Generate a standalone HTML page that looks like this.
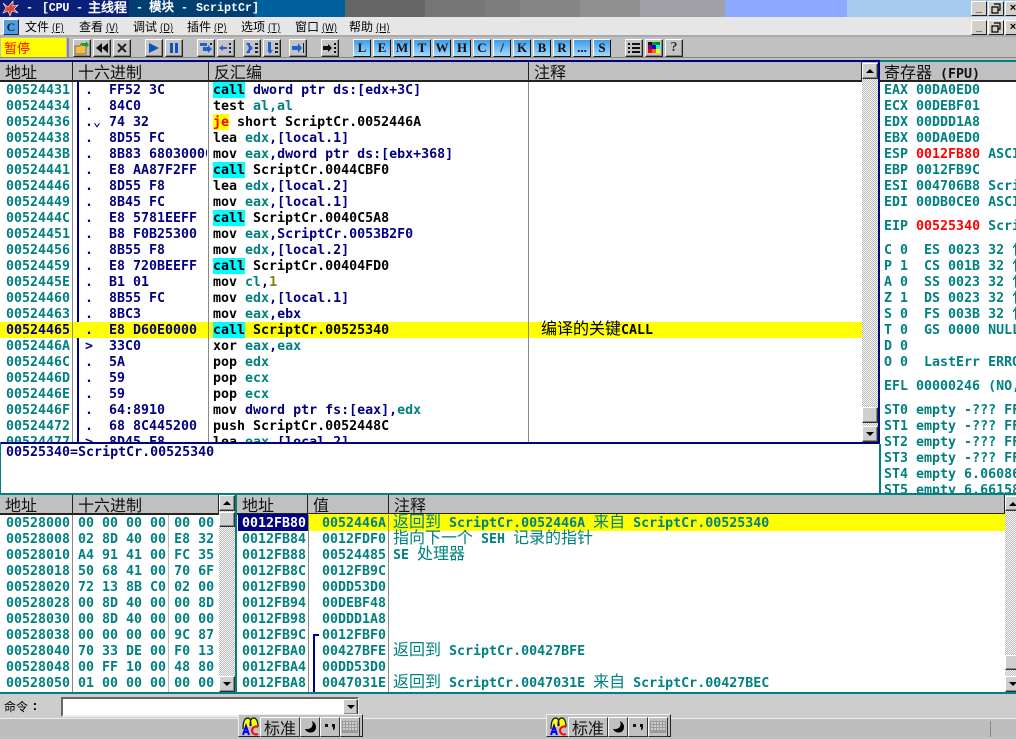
<!DOCTYPE html>
<html><head><meta charset="utf-8"><style>
html,body{margin:0;padding:0;width:1016px;height:737px;overflow:hidden;background:#c0c0c0}
*{box-sizing:border-box}
.a{position:absolute}
pre,.m{position:absolute;margin:0;font:bold 13.3px/16px "DejaVu Sans Mono","Liberation Mono",monospace;white-space:pre;color:#008080}
.n{color:#000080}.b{color:#000}.t{color:#008080}.r{color:#f00}.o{color:#808000}
.cy{background:linear-gradient(#0ff 15px,transparent 15px);box-shadow:0 -1px #0ff;color:#000;display:inline-block;height:16px}
.ye{background:linear-gradient(#ff0 15px,transparent 15px);box-shadow:0 -1px #ff0;color:#f00;display:inline-block;height:16px}
.c{font-family:"WenQuanYi Zen Hei","Noto Sans CJK SC",sans-serif;font-weight:normal}
pre .c{line-height:0;font-size:16px}
.h{position:absolute;background:#c0c0c0;font:16px/19px "WenQuanYi Zen Hei","Noto Sans CJK SC",sans-serif;color:#111;padding-left:5px;border-right:1px solid #222;border-bottom:2px solid #222;height:20px;overflow:hidden;white-space:nowrap}
.mi{position:absolute;top:19px;font:12px/16px "WenQuanYi Zen Hei","Noto Sans CJK SC",sans-serif;color:#000;white-space:nowrap}
.mi u{font-size:10px}
.btn{position:absolute;width:18px;height:18px;top:39px;background:#c4c4c4;border:1px solid;border-color:#fff #222 #222 #fff;box-shadow:inset -1px -1px #888}
.btn svg{position:absolute;left:0;top:0;width:16px;height:16px}
.lb{position:absolute;top:39px;width:18px;height:18px;background:linear-gradient(#3f9fe8,#a5d8ff);border:1px solid;border-color:#fff #111 #111 #fff;font:bold 13px/16px "Liberation Serif",serif;color:#111;text-align:center}
.wb{position:absolute;width:16px;height:15px;background:#d4d0c8;border:1px solid;border-color:#fff #222 #222 #fff;font:bold 11px/12px "Liberation Sans",sans-serif;text-align:center;color:#000;overflow:hidden}
.sb{position:absolute;background:#cfcfcf;border:1px solid;border-color:#fff #333 #333 #fff;box-shadow:inset -1px -1px #888}
.up:after,.dn:after{content:"";position:absolute;left:3px;top:5px;border-left:4px solid transparent;border-right:4px solid transparent}
.up:after{border-bottom:4px solid #000}.dn:after{border-top:4px solid #000}
.ck{position:absolute;background:repeating-conic-gradient(#bcbcbc 0 25%,#f6f6f6 0 50%) 0 0/2px 2px}
.ime{position:absolute;top:714px;width:125px;height:23px;background:#c0c0c0;border:1px solid;border-color:#eee #222 #222 #eee}
.ime b{position:absolute;top:2px;height:20px;background:#c0c0c0;border:1px solid;border-color:#fff #333 #333 #fff;font:16px/18px "WenQuanYi Zen Hei","Noto Sans CJK SC",sans-serif;color:#111;text-align:center}
.ime svg{position:absolute}
.tt{position:absolute;top:0;height:17px;color:#fff;white-space:pre;font:bold 11.66px/17px "Liberation Mono",monospace}
</style></head><body>

<!-- title bar bands -->
<div class="a" style="left:0;top:0;width:129px;height:17px;background:#0a1f78"></div>
<div class="a" style="left:129px;top:0;width:126px;height:17px;background:#004070"></div>
<div class="a" style="left:255px;top:0;width:90px;height:17px;background:#00609c"></div>
<div class="a" style="left:345px;top:0;width:80px;height:17px;background:#666"></div>
<div class="a" style="left:425px;top:0;width:60px;height:17px;background:#767676"></div>
<div class="a" style="left:485px;top:0;width:35px;height:17px;background:#7c7c7c"></div>
<div class="a" style="left:520px;top:0;width:60px;height:17px;background:#858585"></div>
<div class="a" style="left:580px;top:0;width:60px;height:17px;background:#909090"></div>
<div class="a" style="left:640px;top:0;width:85px;height:17px;background:#a0a0a6"></div>
<div class="a" style="left:725px;top:0;width:122px;height:17px;background:#8ca8ff"></div>
<div class="a" style="left:847px;top:0;width:169px;height:17px;background:#a6caf0"></div>
<svg class="a" style="left:1px;top:0" width="18" height="17" viewBox="0 0 18 17"><path d="M2 3l5 4 5-6 0 5 5-1-4 4 4 4-6-2-2 5-2-5-5 2 3-5z" fill="#e04030" stroke="#fff" stroke-width=".6"/></svg>
<div class="tt" style="left:26px">-</div>
<div class="tt" style="left:42px;letter-spacing:-.2px">[CPU</div>
<div class="tt" style="left:76px">-</div>
<div class="tt c" style="left:88px;font-size:13px;font-weight:bold">主线程</div>
<div class="tt" style="left:136px">-</div>
<div class="tt c" style="left:149px;font-size:12.5px;font-weight:bold">模块</div>
<div class="tt" style="left:181px">-</div>
<div class="tt" style="left:196px">ScriptCr]</div>
<div class="wb" style="left:971px;top:1px">_</div>
<div class="wb" style="left:988px;top:1px"><svg width="14" height="13"><path d="M5 2h6v6h-2M3 5h6v6H3z" fill="none" stroke="#000" stroke-width="1.2"/></svg></div>
<div class="wb" style="left:1005px;top:1px">×</div>

<!-- menu -->
<div class="a" style="left:0;top:17px;width:1016px;height:20px;background:#e6e6e6;border-bottom:2px solid #aaa"></div>
<div class="a" style="left:3px;top:19px;width:16px;height:16px;background:#4aa0e0;border:1px solid;border-color:#fff #225 #225 #fff;font:bold 12px/14px 'Liberation Serif',serif;color:#123;text-align:center">C</div>
<div class="mi" style="left:25px">文件 <u>(F)</u></div>
<div class="mi" style="left:79px">查看 <u>(V)</u></div>
<div class="mi" style="left:133px">调试 <u>(D)</u></div>
<div class="mi" style="left:187px">插件 <u>(P)</u></div>
<div class="mi" style="left:241px">选项 <u>(T)</u></div>
<div class="mi" style="left:295px">窗口 <u>(W)</u></div>
<div class="mi" style="left:349px">帮助 <u>(H)</u></div>
<div class="wb" style="left:971px;top:20px">_</div>
<div class="wb" style="left:988px;top:20px"><svg width="14" height="13"><path d="M5 2h6v6h-2M3 5h6v6H3z" fill="none" stroke="#000" stroke-width="1.2"/></svg></div>
<div class="wb" style="left:1005px;top:20px">×</div>

<!-- toolbar -->
<div class="a" style="left:0;top:37px;width:1016px;height:21px;background:#c0c0c0;border-bottom:1px solid #888"></div>
<div class="a c" style="left:1px;top:38px;width:65px;height:19px;background:#ff0;color:#f00;font-size:13px;line-height:19px;padding-left:3px">暂停</div>
<div class="a" style="left:67px;top:38px;width:2px;height:19px;background:#888"></div>

<div class="btn" style="left:73px"><svg viewBox="0 0 16 16"><path d="M1 6h5l1-2h5v10H1z" fill="#f0c040" stroke="#864"/><path d="M7 3l5 0 0-2 3 4-3 3 0-2-4 0z" fill="#1a9a30"/></svg></div>
<div class="btn" style="left:93px"><svg viewBox="0 0 16 16"><path d="M8 3v10L2 8zM14 3v10L8 8z" fill="#111"/></svg></div>
<div class="btn" style="left:113px"><svg viewBox="0 0 16 16"><path d="M4 4l8 8M12 4l-8 8" stroke="#222" stroke-width="2"/></svg></div>
<div class="btn" style="left:145px"><svg viewBox="0 0 16 16"><path d="M3 3v10l10-5z" fill="#1050c0"/></svg></div>
<div class="btn" style="left:165px"><svg viewBox="0 0 16 16"><path d="M4 3h3v10H4zM9 3h3v10H9z" fill="#1050c0"/></svg></div>
<div class="btn" style="left:197px"><svg viewBox="0 0 16 16"><path d="M2 3h7v3h-7zM5 7h5V5l4 4-4 4v-2H5z" fill="#2060d0"/><path d="M12 3h2v2h-2z" fill="#222"/></svg></div>
<div class="btn" style="left:217px"><svg viewBox="0 0 16 16"><path d="M1 8l4-3v2h4v2H5v2z" fill="#2060d0"/><path d="M11 3h2v2h-2zM11 7h2v2h-2zM11 11h2v2h-2z" fill="#222"/></svg></div>
<div class="btn" style="left:243px"><svg viewBox="0 0 16 16"><path d="M2 3h4v2l3 3-3 3v2H2l3-5z" fill="#2060d0"/><path d="M11 3h3v2h-3zM11 7h3v2h-3zM11 11h3v2h-3z" fill="#222"/></svg></div>
<div class="btn" style="left:263px"><svg viewBox="0 0 16 16"><path d="M4 2h3v8h2l-3 4-3-4h1z" fill="#2060d0"/><path d="M11 3h3v2h-3zM11 7h3v2h-3zM11 11h3v2h-3z" fill="#222"/></svg></div>
<div class="btn" style="left:289px"><svg viewBox="0 0 16 16"><path d="M2 6h6V3l4 5-4 5v-3H2z" fill="#2060d0"/><path d="M13 3h1v10h-1z" fill="#222"/></svg></div>
<div class="btn" style="left:321px"><svg viewBox="0 0 16 16"><path d="M1 6h5V4l4 4-4 4v-2H1z" fill="#111"/><path d="M12 3h2v2h-2zM12 7h2v2h-2zM12 11h2v2h-2z" fill="#111"/></svg></div>

<div class="lb" style="left:353px">L</div><div class="lb" style="left:373px">E</div><div class="lb" style="left:393px">M</div><div class="lb" style="left:413px">T</div><div class="lb" style="left:433px">W</div><div class="lb" style="left:453px">H</div><div class="lb" style="left:473px">C</div><div class="lb" style="left:493px">/</div><div class="lb" style="left:513px">K</div><div class="lb" style="left:533px">B</div><div class="lb" style="left:553px">R</div><div class="lb" style="left:573px">...</div><div class="lb" style="left:593px">S</div>

<div class="btn" style="left:625px"><svg viewBox="0 0 16 16"><path d="M2 3h2v2H2zM6 3h8v2H6zM2 7h2v2H2zM6 7h8v2H6zM2 11h2v2H2zM6 11h8v2H6z" fill="#111"/></svg></div>
<div class="btn" style="left:645px"><svg viewBox="0 0 16 16"><path d="M2 2h4v3H2z" fill="#111"/><path d="M6 2h4v3H6z" fill="#0a0"/><path d="M10 2h4v3h-4z" fill="#080"/><path d="M2 5h4v4H2z" fill="#808"/><path d="M6 5h4v4H6z" fill="#00f"/><path d="M10 5h4v4h-4z" fill="#0ff"/><path d="M2 9h4v4H2z" fill="#f00"/><path d="M6 9h4v4H6z" fill="#f60"/><path d="M10 9h4v4h-4z" fill="#ff0"/></svg></div>
<div class="btn" style="left:665px;font:bold 14px/15px 'Liberation Serif',serif;text-align:center;color:#333">?</div>

<!-- disasm pane -->
<div class="a" style="left:0;top:60px;width:880px;height:2px;background:#000080"></div>
<div class="a" style="left:880px;top:60px;width:136px;height:2px;background:#008080"></div>
<div class="a" style="left:0;top:82px;width:878px;height:360px;background:#fff"></div>
<div class="h" style="left:0;top:62px;width:73px">地址</div>
<div class="h" style="left:73px;top:62px;width:136px">十六进制</div>
<div class="h" style="left:209px;top:62px;width:320px">反汇编</div>
<div class="h" style="left:529px;top:62px;width:333px">注释</div>
<div class="a" style="left:0;top:322px;width:862px;height:16px;background:#ff0"></div>
<div class="a" style="left:72px;top:82px;width:1px;height:360px;background:#888"></div>
<div class="a" style="left:77px;top:82px;width:2px;height:240px;background:#000080"></div>
<div class="a" style="left:77px;top:338px;width:2px;height:104px;background:#000080"></div>
<div class="a" style="left:208px;top:82px;width:1px;height:360px;background:#888"></div>
<div class="a" style="left:528px;top:82px;width:1px;height:360px;background:#888"></div>

<div class="a" style="left:0;top:82px;width:862px;height:360px;overflow:hidden">
<pre style="left:6px;top:1px">00524431
00524434
00524436
00524438
0052443B
00524441
00524446
00524449
0052444C
00524451
00524456
00524459
0052445E
00524460
00524463
<span class="n">00524465</span>
0052446A
0052446C
0052446D
0052446E
0052446F
00524472
00524477</pre>
<pre class="n" style="left:85px;top:1px">.
.
.&#8964;
.
.
.
.
.
.
.
.
.
.
.
.
.
&gt;
.
.
.
.
.
&gt;</pre>
<div class="a" style="left:0;top:0;width:207px;height:360px;overflow:hidden"><pre class="n" style="left:109px;top:1px">FF52 3C
84C0
74 32
8D55 FC
8B83 68030000
E8 AA87F2FF
8D55 F8
8B45 FC
E8 5781EEFF
B8 F0B25300
8B55 F8
E8 720BEEFF
B1 01
8B55 FC
8BC3
E8 D60E0000
33C0
5A
59
59
64:8910
68 8C445200
8D45 F8</pre></div>
<pre class="b" style="left:213px;top:1px"><span class="cy">call</span> <span class="n">dword ptr ds:[edx+3C]</span>
test <span class="t">al,al</span>
<span class="ye">je</span> short ScriptCr.0052446A
lea <span class="t">edx</span><span class="n">,[local.1]</span>
mov <span class="t">eax</span><span class="n">,dword ptr ds:[ebx+368]</span>
<span class="cy">call</span> ScriptCr.0044CBF0
lea <span class="t">edx</span><span class="n">,[local.2]</span>
mov <span class="t">eax</span><span class="n">,[local.1]</span>
<span class="cy">call</span> ScriptCr.0040C5A8
mov <span class="t">eax</span><span class="n">,ScriptCr.0053B2F0</span>
mov <span class="t">edx</span><span class="n">,[local.2]</span>
<span class="cy">call</span> ScriptCr.00404FD0
mov <span class="t">cl</span><span class="n">,</span><span class="o">1</span>
mov <span class="t">edx</span><span class="n">,[local.1]</span>
mov <span class="t">eax</span><span class="n">,ebx</span>
<span class="cy">call</span> ScriptCr.00525340
xor <span class="t">eax</span><span class="n">,</span><span class="t">eax</span>
pop <span class="t">edx</span>
pop <span class="t">ecx</span>
pop <span class="t">ecx</span>
mov <span class="n">dword ptr fs:[eax],</span><span class="t">edx</span>
push ScriptCr.0052448C
lea <span class="t">eax</span><span class="n">,[local.2]</span></pre>
<pre class="b" style="left:541px;top:241px"><span class="c">编译的关键</span>CALL</pre>
</div>

<!-- disasm scrollbar -->
<div class="ck" style="left:862px;top:79px;width:16px;height:363px"></div>
<div class="sb up" style="left:862px;top:63px;width:16px;height:16px"></div>
<div class="sb" style="left:862px;top:407px;width:16px;height:16px"></div>
<div class="sb dn" style="left:862px;top:426px;width:16px;height:16px"></div>
<div class="a" style="left:878px;top:62px;width:2px;height:382px;background:#000080"></div>
<div class="a" style="left:0;top:442px;width:880px;height:2px;background:#000080"></div>

<!-- info pane -->
<div class="a" style="left:0;top:444px;width:879px;height:49px;background:#fff;border-left:1px solid #008080"></div>
<pre class="n" style="left:6px;top:445px">00525340=ScriptCr.00525340</pre>
<div class="a" style="left:0;top:493px;width:1016px;height:2px;background:#008080"></div>
<div class="a" style="left:0;top:442px;width:1px;height:52px;background:#008080"></div>

<!-- register pane -->
<div class="a" style="left:880px;top:62px;width:136px;height:20px;background:#c0c0c0;border-bottom:2px solid #222"></div>
<div class="a" style="left:884px;top:62px;font:16px/19px 'WenQuanYi Zen Hei','Noto Sans CJK SC',sans-serif;color:#111;white-space:pre">寄存器<span style="font:bold 13.3px/19px 'DejaVu Sans Mono',monospace"> (FPU)</span></div>
<div class="a" style="left:880px;top:82px;width:136px;height:411px;background:#fff;overflow:hidden">
<pre style="left:4px;top:1px">EAX 00DA0ED0
ECX 00DEBF01
EDX 00DDD1A8
EBX 00DA0ED0
ESP <span class="r">0012FB80</span> ASCII
EBP 0012FB9C
ESI 004706B8 Script
EDI 00DB0CE0 ASCII</pre>
<pre style="left:4px;top:137px">EIP <span class="r">00525340</span> Script</pre>
<pre style="left:4px;top:161px">C 0  ES 0023 32 <span class="c">位</span>
P 1  CS 001B 32 <span class="c">位</span>
A 0  SS 0023 32 <span class="c">位</span>
Z 1  DS 0023 32 <span class="c">位</span>
S 0  FS 003B 32 <span class="c">位</span>
T 0  GS 0000 NULL
D 0
O 0  LastErr ERROR</pre>
<pre style="left:4px;top:297px">EFL 00000246 (NO,</pre>
<pre style="left:4px;top:321px">ST0 empty -??? FF
ST1 empty -??? FF
ST2 empty -??? FF
ST3 empty -??? FF
ST4 empty 6.06086
ST5 empty 6.66158</pre>
</div>
<div class="a" style="left:879px;top:444px;width:2px;height:49px;background:#008080"></div>

<!-- dump pane -->
<div class="a" style="left:0;top:515px;width:219px;height:177px;background:#fff"></div>
<div class="h" style="left:0;top:495px;width:73px">地址</div>
<div class="h" style="left:73px;top:495px;width:146px">十六进制</div>
<div class="a" style="left:72px;top:515px;width:1px;height:177px;background:#888"></div>
<div class="a" style="left:168px;top:515px;width:1px;height:177px;background:#bbb"></div>
<div class="a" style="left:0;top:515px;width:219px;height:177px;overflow:hidden">
<pre style="left:6px;top:1px">00528000
00528008
00528010
00528018
00528020
00528028
00528030
00528038
00528040
00528048
00528050</pre>
<pre style="left:78px;top:1px">00 00 00 00 00 00
02 8D 40 00 E8 32
A4 91 41 00 FC 35
50 68 41 00 70 6F
72 13 8B C0 02 00
00 8D 40 00 00 8D
00 8D 40 00 00 00
00 00 00 00 9C 87
70 33 DE 00 F0 13
00 FF 10 00 48 80
01 00 00 00 00 00</pre>
</div>
<div class="ck" style="left:219px;top:495px;width:16px;height:197px"></div>
<div class="sb up" style="left:219px;top:495px;width:16px;height:16px"></div>
<div class="sb" style="left:219px;top:512px;width:16px;height:15px"></div>
<div class="sb dn" style="left:219px;top:676px;width:16px;height:16px"></div>
<div class="a" style="left:235px;top:495px;width:2px;height:198px;background:#008080"></div>

<!-- stack pane -->
<div class="a" style="left:237px;top:515px;width:768px;height:177px;background:#fff"></div>
<div class="h" style="left:237px;top:495px;width:71px">地址</div>
<div class="h" style="left:308px;top:495px;width:81px">值</div>
<div class="h" style="left:389px;top:495px;width:616px">注释</div>
<div class="a" style="left:308px;top:514px;width:80px;height:17px;background:#ff0"></div>
<div class="a" style="left:388px;top:514px;width:617px;height:17px;background:#ff0"></div>
<div class="a" style="left:238px;top:514px;width:70px;height:17px;background:#000080"></div>
<div class="a" style="left:308px;top:515px;width:1px;height:177px;background:#888"></div>
<div class="a" style="left:388px;top:515px;width:1px;height:177px;background:#888"></div>
<div class="a" style="left:313px;top:634px;width:2px;height:58px;background:#000080"></div>
<div class="a" style="left:313px;top:634px;width:6px;height:2px;background:#000080"></div>
<div class="a" style="left:237px;top:514px;width:768px;height:178px;overflow:hidden">
<pre style="left:5px;top:2px"><span style="color:#fff">0012FB80</span>
0012FB84
0012FB88
0012FB8C
0012FB90
0012FB94
0012FB98
0012FB9C
0012FBA0
0012FBA4
0012FBA8</pre>
<pre style="left:85px;top:2px">0052446A
0012FDF0
00524485
0012FB9C
00DD53D0
00DEBF48
00DDD1A8
0012FBF0
00427BFE
00DD53D0
0047031E</pre>
<pre style="left:156px;top:2px"><span class="c">返回到</span> ScriptCr.0052446A <span class="c">来自</span> ScriptCr.00525340
<span class="c">指向下一个</span> SEH <span class="c">记录的指针</span>
SE <span class="c">处理器</span>





<span class="c">返回到</span> ScriptCr.00427BFE

<span class="c">返回到</span> ScriptCr.0047031E <span class="c">来自</span> ScriptCr.00427BEC</pre>
</div>
<div class="ck" style="left:1005px;top:495px;width:11px;height:197px"></div>
<div class="sb up" style="left:1005px;top:496px;width:16px;height:15px"></div>
<div class="sb" style="left:1005px;top:655px;width:16px;height:15px"></div>
<div class="sb dn" style="left:1005px;top:676px;width:16px;height:16px"></div>
<div class="a" style="left:0;top:692px;width:1016px;height:2px;background:#008080"></div>

<!-- command -->
<div class="a" style="left:0;top:694px;width:1016px;height:25px;background:#cdcdcd;border-bottom:1px solid #eee"></div>
<div class="a c" style="left:4px;top:699px;font-size:12px;line-height:16px;color:#000">命令</div>
<div class="a" style="left:31px;top:699px;font:bold 13px/16px 'Liberation Mono',monospace;color:#000">:</div>
<div class="a" style="left:61px;top:697px;width:298px;height:20px;background:#fff;border:2px solid;border-color:#666 #eee #eee #666"></div>
<div class="sb dn" style="left:343px;top:699px;width:15px;height:16px;background:#ccc"></div>

<!-- status bar -->
<div class="a" style="left:0;top:719px;width:1016px;height:18px;background:#bdbdbd"></div>
<div class="a" style="left:990px;top:721px;width:1px;height:16px;background:#888"></div>

<!-- IME bars -->
<div class="ime" style="left:238px">
<svg style="left:2px;top:2px" width="19" height="20" viewBox="0 0 19 20"><path d="M2 12C2 2 5 1 7 1s3 3 3 8M9 9C9 2 11 1 13 1s4 3 4 9" fill="#ff0" stroke="#111" stroke-width="1.2"/><path d="M2 18l3-9 3 9M3 15h4" fill="none" stroke="#00f" stroke-width="2"/><path d="M17 10a4 4 0 1 0 0 7" fill="none" stroke="#f00" stroke-width="2"/></svg>
<b style="left:21px;width:40px">标准</b>
<b style="left:61px;width:20px"><svg style="left:2px;top:2px" width="14" height="14" viewBox="0 0 14 14"><path d="M9 1c2 5-1 9-7 8 2 5 11 5 11-2 0-3-2-5-4-6z" fill="#000"/></svg></b>
<b style="left:81px;width:20px"><svg style="left:3px;top:3px" width="12" height="12" viewBox="0 0 12 12"><path d="M1 3h3v3H1zM8 3h3v4l-1 2H9V6H8z" fill="#111"/></svg></b>
<b style="left:101px;width:20px"><svg style="left:1px;top:2px" width="16" height="14" viewBox="0 0 16 14"><rect x="0" y="1" width="16" height="12" fill="#9a9a9a"/><path d="M1 3h14M1 6h14M1 9h14" stroke="#e0e0e0" stroke-width="1.4" stroke-dasharray="2 1"/></svg></b>
</div>
<div class="ime" style="left:546px">
<svg style="left:2px;top:2px" width="19" height="20" viewBox="0 0 19 20"><path d="M2 12C2 2 5 1 7 1s3 3 3 8M9 9C9 2 11 1 13 1s4 3 4 9" fill="#ff0" stroke="#111" stroke-width="1.2"/><path d="M2 18l3-9 3 9M3 15h4" fill="none" stroke="#00f" stroke-width="2"/><path d="M17 10a4 4 0 1 0 0 7" fill="none" stroke="#f00" stroke-width="2"/></svg>
<b style="left:21px;width:40px">标准</b>
<b style="left:61px;width:20px"><svg style="left:2px;top:2px" width="14" height="14" viewBox="0 0 14 14"><path d="M9 1c2 5-1 9-7 8 2 5 11 5 11-2 0-3-2-5-4-6z" fill="#000"/></svg></b>
<b style="left:81px;width:20px"><svg style="left:3px;top:3px" width="12" height="12" viewBox="0 0 12 12"><path d="M1 3h3v3H1zM8 3h3v4l-1 2H9V6H8z" fill="#111"/></svg></b>
<b style="left:101px;width:20px"><svg style="left:1px;top:2px" width="16" height="14" viewBox="0 0 16 14"><rect x="0" y="1" width="16" height="12" fill="#9a9a9a"/><path d="M1 3h14M1 6h14M1 9h14" stroke="#e0e0e0" stroke-width="1.4" stroke-dasharray="2 1"/></svg></b>
</div>
</body></html>
